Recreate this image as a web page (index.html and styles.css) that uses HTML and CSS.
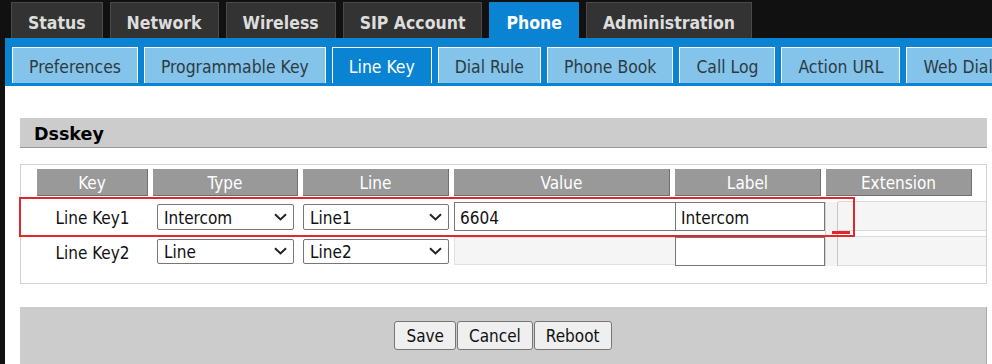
FILE: index.html
```html
<!DOCTYPE html>
<html lang="en">

<head>
  <meta charset="UTF-8" />
  <meta name="viewport" content="width=device-width, initial-scale=1.0" />
  <title>Phone - Line Key</title>
  <link rel="stylesheet" href="styles.css">
</head>

<body>
  <div class="topnav">
    <a class="tab">Status</a>
    <a class="tab">Network</a>
    <a class="tab">Wireless</a>
    <a class="tab">SIP Account</a>
    <a class="tab active">Phone</a>
    <a class="tab">Administration</a>
  </div>

  <div class="subnav">
    <a class="subtab">Preferences</a>
    <a class="subtab">Programmable Key</a>
    <a class="subtab active">Line Key</a>
    <a class="subtab">Dial Rule</a>
    <a class="subtab">Phone Book</a>
    <a class="subtab">Call Log</a>
    <a class="subtab">Action URL</a>
    <a class="subtab">Web Dial</a>
  </div>

  <div class="content">
    <div class="section-title">Dsskey</div>

    <div class="dsskey-box">
      <div class="dss-head">
        <div class="h-key">Key</div>
        <div class="h-type">Type</div>
        <div class="h-line">Line</div>
        <div class="h-value">Value</div>
        <div class="h-label">Label</div>
        <div class="h-ext">Extension</div>
      </div>

      <div class="dss-row row1">
        <div class="c-key">Line Key1</div>
        <div class="sel c-type">
          <select><option>Intercom</option></select>
          <svg class="chev" width="13" height="8" viewBox="0 0 13 8"><path d="M1 1.2l5.5 5.2 5.5-5.2" fill="none" stroke="#222" stroke-width="2"/></svg>
        </div>
        <div class="sel c-line">
          <select><option>Line1</option></select>
          <svg class="chev" width="13" height="8" viewBox="0 0 13 8"><path d="M1 1.2l5.5 5.2 5.5-5.2" fill="none" stroke="#222" stroke-width="2"/></svg>
        </div>
        <input class="c-value" type="text" value="6604">
        <input class="c-label" type="text" value="Intercom">
        <div class="c-gap"></div>
        <div class="c-ext"></div>
      </div>

      <div class="dss-row row2">
        <div class="c-key">Line Key2</div>
        <div class="sel c-type">
          <select><option>Line</option></select>
          <svg class="chev" width="13" height="8" viewBox="0 0 13 8"><path d="M1 1.2l5.5 5.2 5.5-5.2" fill="none" stroke="#222" stroke-width="2"/></svg>
        </div>
        <div class="sel c-line">
          <select><option>Line2</option></select>
          <svg class="chev" width="13" height="8" viewBox="0 0 13 8"><path d="M1 1.2l5.5 5.2 5.5-5.2" fill="none" stroke="#222" stroke-width="2"/></svg>
        </div>
        <input class="c-value" type="text" value="" disabled>
        <input class="c-label" type="text" value="">
        <div class="c-gap"></div>
        <div class="c-ext"></div>
      </div>

      <!-- red annotation over the first row -->
      <div class="mark"></div>
      <div class="mark-dash"></div>
    </div>

    <div class="btnbar">
      <button>Save</button>
      <button>Cancel</button>
      <button>Reboot</button>
    </div>
  </div>
</body>

</html>
```

FILE: styles.css
```css
html,
body {
  margin: 0;
  padding: 0;
}

body {
  height: 364px;
  overflow: hidden;
  background: #111;
  color: #111;
  font-family: "DejaVu Sans Condensed", "DejaVu Sans", sans-serif;
  font-stretch: condensed;
  font-size: 17px;
}

/* top menu */
.topnav {
  display: flex;
  gap: 7px;
  height: 36px;
  padding: 2px 0 0 11px;
}

.topnav .tab {
  box-sizing: border-box;
  height: 36px;
  padding: 5px 16px 0;
  line-height: 30px;
  background: #333;
  border: 1px solid #4a4a4a;
  border-bottom: 0;
  color: #ddd;
  font-size: 17.5px;
  font-weight: bold;
  white-space: nowrap;
}

.topnav .tab.active {
  background: #0a84d2;
  border-color: #0a84d2;
  color: #fff;
}

/* second menu */
.subnav {
  display: flex;
  gap: 6px;
  margin-left: 5px;
  padding: 9px 0 3px 7px;
  background: #0a84d2;
  overflow: hidden;
}

.subnav .subtab {
  flex: none;
  box-sizing: border-box;
  height: 36px;
  padding: 4px 16px 0;
  line-height: 31px;
  background: #84c4ea;
  border: 1px solid #fff;
  border-bottom: 0;
  color: #2e3a42;
  font-size: 17.4px;
  white-space: nowrap;
}

.subnav .subtab.active {
  background: #0a84d2;
  color: #fff;
}

/* page body */
.content {
  margin-left: 5px;
  padding: 32px 5px 0 15px;
  background: #fff;
}

.section-title {
  height: 25px;
  padding: 4px 0 0 14px;
  line-height: 25px;
  background: #ccc;
  border-bottom: 1px solid #9a9a9a;
  font-family: "DejaVu Sans", sans-serif;
  font-stretch: normal;
  font-size: 17.5px;
  font-weight: bold;
  color: #000;
}

.dsskey-box {
  position: relative;
  margin-top: 16px;
  padding: 4px 0 17px;
  border: 1px solid #d2d2d2;
}

.dss-head {
  display: flex;
  gap: 5px;
  padding-left: 16px;
}

.dss-head div {
  box-sizing: border-box;
  height: 27px;
  padding-top: 2px;
  line-height: 25px;
  text-align: center;
  background: #999;
  border-right: 1px solid #707070;
  border-bottom: 1px solid #707070;
  color: #fff;
}

.h-key { width: 111px; }
.h-type { width: 145px; }
.h-line { width: 146px; }
.h-value { width: 216px; }
.h-label { width: 146px; }
.h-ext { width: 146px; }

.dss-row {
  display: flex;
  align-items: center;
  padding-left: 16px;
}

.row1 {
  height: 39px;
  margin-top: 1px;
}

.row2 {
  height: 30px;
}

.c-key {
  width: 111px;
  padding-top: 3px;
  text-align: center;
}

.sel {
  position: relative;
  margin-left: 9px;
}

.sel.c-type { width: 137px; }
.sel.c-line { width: 146px; }

.sel select {
  display: block;
  box-sizing: border-box;
  width: 100%;
  height: 26px;
  padding: 2px 0 0 6px;
  -webkit-appearance: none;
  appearance: none;
  background: #fff;
  border: 1px solid #767676;
  border-radius: 2px;
  font: inherit;
  color: #111;
}

.row2 .sel select {
  height: 25px;
}

.sel .chev {
  position: absolute;
  right: 7px;
  top: 9px;
}

.row2 .sel .chev {
  top: 8px;
}

input {
  box-sizing: border-box;
  margin: 0;
  padding: 2px 0 0 5px;
  font: inherit;
  color: #111;
  background: #fff;
  border: 1px solid #767676;
  outline: none;
}

.c-value {
  width: 221px;
  height: 29px;
  margin-left: 5px;
  border-right: 0;
}

.c-label {
  width: 150px;
  height: 29px;
}

.row2 .c-value {
  height: 28px;
  background: #f5f5f5;
  border-color: #e0e0e0;
}

.row2 .c-label {
  height: 29px;
}

.c-gap {
  width: 11px;
  align-self: flex-end;
  height: 34px;
  background: #f3f3f3;
  border-left: 1px solid #d4d4d4;
  border-right: 1px solid #c8c8c8;
}

.row2 .c-gap {
  height: 30px;
}

.c-ext {
  flex: 1;
  box-sizing: border-box;
  height: 30px;
  background: #f5f5f5;
  border-top: 1px solid #dcdcdc;
  border-bottom: 1px solid #dcdcdc;
}

.row1 .c-ext {
  align-self: flex-start;
  margin-top: 4px;
}

.row2 .c-ext {
  align-self: stretch;
}

.mark {
  position: absolute;
  left: -2px;
  top: 32px;
  width: 836px;
  height: 40px;
  box-sizing: border-box;
  border: 2px solid #e1262c;
}

.mark-dash {
  position: absolute;
  left: 811px;
  top: 66px;
  width: 18px;
  height: 3px;
  background: #e1262c;
}

/* buttons */
.btnbar {
  display: flex;
  justify-content: center;
  gap: 1px;
  height: 43px;
  margin-top: 23px;
  padding-top: 14px;
  background: #ccc;
  border-right: 1px solid #aaa;
}

.btnbar button {
  box-sizing: border-box;
  height: 29px;
  padding: 1px 11px 0;
  background: #efefef;
  border: 1px solid #767676;
  border-radius: 3px;
  font: inherit;
  color: #111;
}
```
